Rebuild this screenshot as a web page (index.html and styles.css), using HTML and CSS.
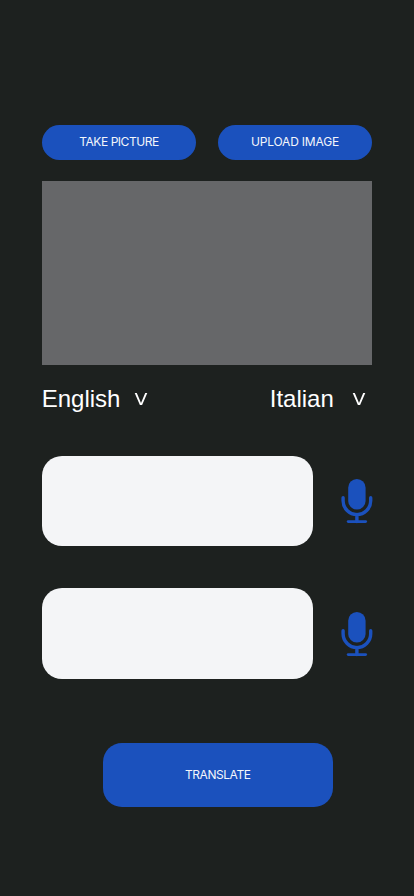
FILE: index.html
```html
<!DOCTYPE html>
<html lang="en">
<head>
<meta charset="utf-8">
<meta name="viewport" content="width=device-width, initial-scale=1">
<title>Translate</title>
<link rel="stylesheet" href="styles.css">
</head>
<body>
<svg width="0" height="0" class="defs" aria-hidden="true">
  <symbol id="mic" viewBox="0 0 32 46">
    <rect x="7.2" y="1" width="17.4" height="30.6" rx="8.7" fill="currentColor"/>
    <path d="M2.1 19.8v3a13.8 13.8 0 0 0 27.6 0v-3M15.9 36.5v7" fill="none" stroke="currentColor" stroke-width="3.4" stroke-linecap="round"/>
    <path d="M7.2 43.6h17.4" fill="none" stroke="currentColor" stroke-width="2.9" stroke-linecap="round"/>
  </symbol>
  <symbol id="chevron" viewBox="0 0 14 14">
    <path d="M.7.9h2.1L7 10.9 11.2.9h2.1L8.1 13H5.9z" fill="currentColor"/>
  </symbol>
</svg>
<main class="screen">
  <div class="actions">
    <button class="button"><span class="take">TAKE PICTURE</span></button>
    <button class="button"><span class="upload">UPLOAD IMAGE</span></button>
  </div>
  <div class="preview"></div>
  <div class="languages">
    <div class="language"><span>English</span><svg class="chevron"><use href="#chevron"/></svg></div>
    <div class="language target"><span>Italian</span><svg class="chevron"><use href="#chevron"/></svg></div>
  </div>
  <div class="entry"><div class="field"></div><svg class="mic"><use href="#mic"/></svg></div>
  <div class="entry second"><div class="field"></div><svg class="mic"><use href="#mic"/></svg></div>
  <button class="button translate"><span>TRANSLATE</span></button>
</main>
</body>
</html>
```
FILE: styles.css
```css
* { box-sizing: border-box; }
body { margin: 0; background: #1d211f; }
.defs { display: block; }
.screen {
  height: 896px;
  padding: 124.7px 41.7px 0;
  overflow: hidden;
  color: #fff;
  font-family: "Liberation Sans", Arial, sans-serif;
}
.actions { display: flex; justify-content: space-between; }
.button {
  display: flex;
  align-items: center;
  justify-content: center;
  width: 154.6px;
  height: 35.7px;
  padding: 0 0 2px;
  border: 0;
  border-radius: 18px;
  background: #1b51bd;
  color: #f4f6fb;
  font: 400 12px/16px Inter, sans-serif;
  letter-spacing: -0.2px;
  white-space: nowrap;
}
.take { letter-spacing: -0.45px; }
.preview { height: 184.2px; margin-top: 20.6px; background: #666769; }
.languages {
  display: flex;
  justify-content: space-between;
  height: 30px;
  margin-top: 18.8px;
  font-size: 24px;
  line-height: 30px;
}
.language { display: flex; }
.chevron { width: 14px; height: 14px; margin: 8.5px 0 0 14px; }
.target { margin-right: 6.5px; }
.target .chevron { margin-left: 18px; }
.entry {
  display: flex;
  align-items: center;
  justify-content: space-between;
  height: 90.4px;
  margin-top: 41.8px;
}
.field { width: 271.5px; height: 100%; border-radius: 20px; background: #f4f5f7; }
.languages + .entry { margin-top: 42px; }
.mic { width: 32px; height: 46px; margin-right: -0.8px; color: #1b51bd; }
.second .mic { margin-top: 1px; }
.translate {
  width: 229.8px;
  height: 64.2px;
  margin: 64.2px 0 0 61.2px;
  padding: 0;
  border-radius: 19px;
  letter-spacing: -0.45px;
}
```
